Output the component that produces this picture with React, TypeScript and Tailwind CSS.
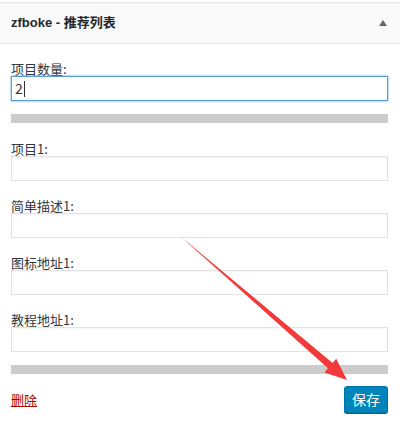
import React from "react";

const font = { fontFamily: '"Noto Sans CJK SC", "Noto Sans", sans-serif' };
const titleFont = { fontFamily: '"Liberation Sans", "Noto Sans CJK SC", sans-serif' };

function Field({ label, value, focused }: { label: string; value?: string; focused?: boolean }) {
  return (
    <div className="flex flex-col">
      <div className="h-[15px] leading-[15px] text-[13px] text-[#32373c]">{label}</div>
      <div
        className={
          "h-[25px] w-full bg-white flex items-center px-[3px] text-[14px] text-[#32373c] " +
          (focused
            ? "border border-[#5b9dd9] shadow-[0_0_2px_rgba(30,140,190,0.8)]"
            : "border border-[#e2e2e2] shadow-[inset_0_1px_2px_rgba(0,0,0,0.04)]")
        }
      >
        {value}
        {focused && <span className="inline-block w-px h-[16px] bg-[#333] ml-[1px]" />}
      </div>
    </div>
  );
}

export default function App() {
  return (
    <div className="relative w-[400px] h-[427px] bg-white overflow-hidden" style={font}>
      <div className="h-[2px]" />
      <div className="border-t border-b border-[#e5e5e5] bg-[#f9f9f9] h-[42px] flex items-center justify-between pl-[11px] pr-[13px]">
        <span className="text-[13px] font-bold text-[#23282d]" style={titleFont}>
          zfboke - 推荐列表
        </span>
        <svg width="8" height="6" viewBox="0 0 8 6">
          <polygon points="4,0 8,6 0,6" fill="#666" />
        </svg>
      </div>
      <div className="px-[11px] pr-[12px] pt-[17px]">
        <Field label="项目数量:" value="2" focused />
        <div className="mt-[13px] h-[9px] bg-[#cccccc]" />
        <div className="mt-[18px] flex flex-col gap-[17px]">
          <Field label="项目1:" />
          <Field label="简单描述1:" />
          <Field label="图标地址1:" />
          <Field label="教程地址1:" />
        </div>
        <div className="mt-[13px] h-[9px] bg-[#cccccc]" />
        <div className="mt-[12px] flex items-center justify-between">
          <span className="text-[13px] text-[#a00] underline">删除</span>
          <button className="h-[27px] w-[44px] rounded-[3px] bg-[#0085ba] border border-[#0073aa] text-white text-[14px] shadow-[0_1px_0_#006799]">
            保存
          </button>
        </div>
      </div>
      <svg className="absolute left-0 top-0 pointer-events-none" width="400" height="427">
        <polygon
          points="180,236 332.6,363 336.2,358.8 347,380 324.4,372.4 328,368.2"
          fill="#f23a3a"
        />
      </svg>
    </div>
  );
}
